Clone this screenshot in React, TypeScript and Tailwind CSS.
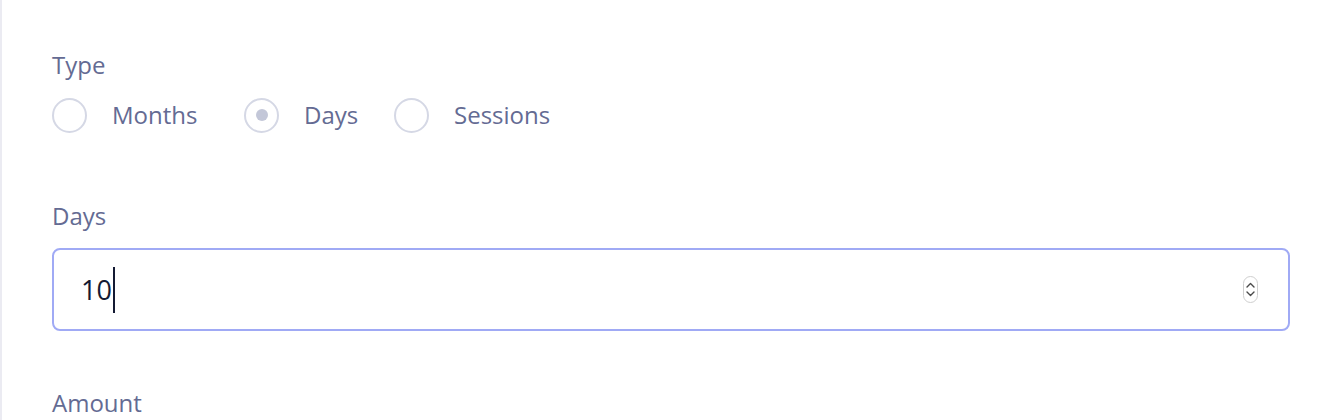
import React from 'react';

const font = { fontFamily: '"Open Sans", "Noto Sans", sans-serif' };

const Radio = ({ label, checked, width }: { label: string; checked?: boolean; width: string }) => (
  <label className={`flex items-center ${width}`}>
    <span className="w-[35px] h-[35px] rounded-full border-2 border-[#d5d8e5] bg-white flex items-center justify-center shrink-0">
      {checked && <span className="w-[12px] h-[12px] rounded-full bg-[#c3c7d8]" />}
    </span>
    <span className="ml-[25px] text-[24px] leading-[36px] text-[#646b93]">{label}</span>
  </label>
);

const Spinner = () => (
  <div className="w-[15px] h-[27px] rounded-full border border-[#cfcfcf] bg-white flex flex-col items-center justify-center gap-[3px]">
    <svg width="9" height="6" viewBox="0 0 9 6" fill="none">
      <path d="M1 5L4.5 1.5L8 5" stroke="#4a4a4a" strokeWidth="1.4" strokeLinecap="round" strokeLinejoin="round" />
    </svg>
    <svg width="9" height="6" viewBox="0 0 9 6" fill="none">
      <path d="M1 1L4.5 4.5L8 1" stroke="#4a4a4a" strokeWidth="1.4" strokeLinecap="round" strokeLinejoin="round" />
    </svg>
  </div>
);

export default function App() {
  return (
    <div className="w-[1332px] h-[420px] bg-white flex overflow-hidden" style={font}>
      <div className="w-[2px] h-full bg-[#ebebf2]" />
      <div className="flex-1 pl-[50px] pr-[42px] pt-[47px]">
        <div className="text-[24px] leading-[36px] text-[#646b93]">Type</div>
        <div className="flex items-center mt-[14px] h-[36px]">
          <Radio label="Months" width="w-[192px]" />
          <Radio label="Days" checked width="w-[150px]" />
          <Radio label="Sessions" width="w-[200px]" />
        </div>

        <div className="mt-[65px] text-[24px] leading-[36px] text-[#646b93]">Days</div>
        <div className="mt-[14px] h-[83px] rounded-[8px] border-2 border-[#a0aaf5] flex items-center pl-[27px] pr-[30px]">
          <span className="text-[27px] text-[#141a33] leading-none">10</span>
          <span className="w-[2px] h-[46px] bg-[#141a33] ml-[1px]" />
          <div className="flex-1" />
          <Spinner />
        </div>

        <div className="mt-[54px] text-[24px] leading-[36px] text-[#646b93]">Amount</div>
      </div>
    </div>
  );
}
